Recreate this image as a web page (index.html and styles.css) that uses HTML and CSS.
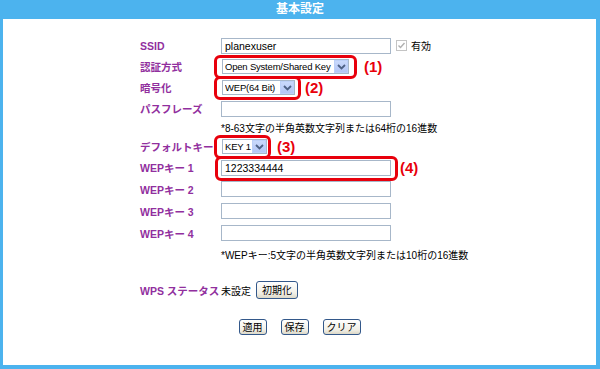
FILE: index.html
```html
<!DOCTYPE html>
<html>
<head>
	<meta charset="utf-8">
	<title>基本設定</title>
	<link rel="stylesheet" href="styles.css">
</head>
<body>
	<div class="header">基本設定</div>
	<div class="panel">
		<div class="form">
			<div class="row">
				<span class="label">SSID</span>
				<span class="field">
					<input class="text" type="text" value="planexuser">
					<span class="check"><svg width="11" height="11" viewBox="0 0 11 11"><rect x="0.5" y="0.5" width="10" height="10" fill="#fff" stroke="#c4c4c4"/><path d="M2.5 5.5 L4.5 7.5 L8.5 3" fill="none" stroke="#b0b0b0" stroke-width="1.4"/></svg></span>
					<span class="valid">有効</span>
				</span>
			</div>
			<div class="row">
				<span class="label">認証方式</span>
				<span class="field">
					<span class="mark m1">
						<span class="select s-auth"><span class="opt">Open System/Shared Key</span><span class="arrow"><svg width="9" height="6" viewBox="0 0 9 6"><path d="M1 1 L4.5 4.5 L8 1" fill="none" stroke="#4d6185" stroke-width="1.8"/></svg></span></span>
					</span>
					<span class="num n1">(1)</span>
				</span>
			</div>
			<div class="row">
				<span class="label">暗号化</span>
				<span class="field">
					<span class="mark m2">
						<span class="select s-enc"><span class="opt">WEP(64 Bit)</span><span class="arrow"><svg width="9" height="6" viewBox="0 0 9 6"><path d="M1 1 L4.5 4.5 L8 1" fill="none" stroke="#4d6185" stroke-width="1.8"/></svg></span></span>
					</span>
					<span class="num">(2)</span>
				</span>
			</div>
			<div class="row">
				<span class="label">パスフレーズ</span>
				<span class="field"><input class="text" type="text"></span>
			</div>
			<div class="row note">
				<span></span>
				<span class="hint">*8-63文字の半角英数文字列または64桁の16進数</span>
			</div>
			<div class="row">
				<span class="label">デフォルトキー</span>
				<span class="field">
					<span class="mark m3">
						<span class="select s-key"><span class="opt">KEY 1</span><span class="arrow"><svg width="9" height="6" viewBox="0 0 9 6"><path d="M1 1 L4.5 4.5 L8 1" fill="none" stroke="#4d6185" stroke-width="1.8"/></svg></span></span>
					</span>
					<span class="num">(3)</span>
				</span>
			</div>
			<div class="row">
				<span class="label">WEPキー 1</span>
				<span class="field">
					<span class="mark m4"><input class="text" type="text" value="1223334444"></span>
					<span class="num n4">(4)</span>
				</span>
			</div>
			<div class="row tall">
				<span class="label">WEPキー 2</span>
				<span class="field"><input class="text" type="text"></span>
			</div>
			<div class="row tall">
				<span class="label">WEPキー 3</span>
				<span class="field"><input class="text" type="text"></span>
			</div>
			<div class="row tall">
				<span class="label">WEPキー 4</span>
				<span class="field"><input class="text" type="text"></span>
			</div>
			<div class="row note2">
				<span></span>
				<span class="hint">*WEPキー:5文字の半角英数文字列または10桁の16進数</span>
			</div>
			<div class="row wps">
				<span class="label">WPS ステータス</span>
				<span class="field">
					<span class="status">未設定</span>
					<button class="btn reset">初期化</button>
				</span>
			</div>
		</div>
		<div class="actions">
			<button class="btn">適用</button>
			<button class="btn">保存</button>
			<button class="btn">クリア</button>
		</div>
	</div>
</body>
</html>
```

FILE: styles.css
```css
html, body {
	margin: 0;
	height: 369px;
	overflow: hidden;
}
body {
	background-color: #4cb3ee;
	font-family: "Liberation Sans", "Noto Sans CJK JP", sans-serif;
	font-size: 10px;
	color: #000;
}
.header {
	height: 19px;
	line-height: 19px;
	text-align: center;
	color: #fff;
	font-weight: bold;
	font-size: 12px;
}
.panel {
	margin: 0 4px 0 3px;
	height: 346px;
	background-color: #fff;
	box-sizing: border-box;
	padding-top: 16px;
}
.form {
	padding-left: 137px;
}
.row {
	display: grid;
	grid-template-columns: 81px 1fr;
	align-items: center;
	height: 21px;
}
.row.tall {
	height: 22px;
}
.row.note {
	height: 17px;
}
.row.note2 {
	height: 20px;
}
.row.wps {
	margin-top: 15px;
	height: 22px;
}
.label {
	color: #912f9e;
	font-weight: bold;
	font-size: 10.5px;
	white-space: nowrap;
}
.field {
	display: flex;
	align-items: center;
}
.text {
	width: 170px;
	height: 16px;
	box-sizing: border-box;
	border: 1px solid #a7b7c9;
	padding: 0 3px;
	margin: 0;
	font-family: inherit;
	font-size: 10.5px;
	color: #000;
	outline: none;
}
.check {
	display: flex;
	margin-left: 5px;
}
.valid {
	margin-left: 4px;
}
.mark {
	position: relative;
	display: inline-flex;
}
.mark::after {
	content: "";
	position: absolute;
	top: -4px;
	bottom: -5px;
	left: -7px;
	right: -6px;
	border: 3px solid #e8000c;
	border-radius: 6px;
}
.mark.m1::after {
	right: -8px;
}
.mark.m3::after {
	right: -4px;
}
.mark.m4::after {
	top: -4px;
	bottom: -5px;
	left: -6px;
	right: -7px;
}
.select {
	display: inline-flex;
	align-items: center;
	height: 15px;
	box-sizing: border-box;
	border: 1px solid #a7b7c9;
	background: #fff;
	padding-left: 2px;
	margin-left: 1px;
}
.s-auth { width: 127px; }
.s-enc { width: 73px; }
.s-key { width: 45px; }
.opt {
	flex: 1;
	white-space: nowrap;
	overflow: hidden;
	font-size: 9.5px;
	letter-spacing: -0.2px;
}
.arrow {
	flex: none;
	width: 14px;
	height: 13px;
	display: flex;
	align-items: center;
	justify-content: center;
	background: linear-gradient(#c9d9fc, #b3c6f5);
	border: 1px solid #bcd0f8;
	box-sizing: border-box;
}
.num {
	color: #e8000c;
	font-weight: bold;
	font-size: 15px;
	margin-left: 10px;
}
.num.n1 {
	margin-left: 15px;
}
.num.n4 {
	margin-left: 9px;
}
.hint {
	white-space: nowrap;
}
.status {
	margin-right: 5px;
}
.btn {
	font-family: "Liberation Sans", "Noto Sans CJK JP", sans-serif;
	font-size: 10px;
	color: #000;
	height: 16px;
	padding: 0 3px;
	border: 1px solid #33588a;
	border-radius: 3px;
	background: linear-gradient(#ffffff, #f1efe6 70%, #dcd8c8);
	line-height: 13px;
	cursor: pointer;
}
.btn.reset {
	height: 18px;
	padding: 0 5px;
}
.actions {
	display: flex;
	justify-content: center;
	gap: 14px;
	margin-top: 18px;
}
```
